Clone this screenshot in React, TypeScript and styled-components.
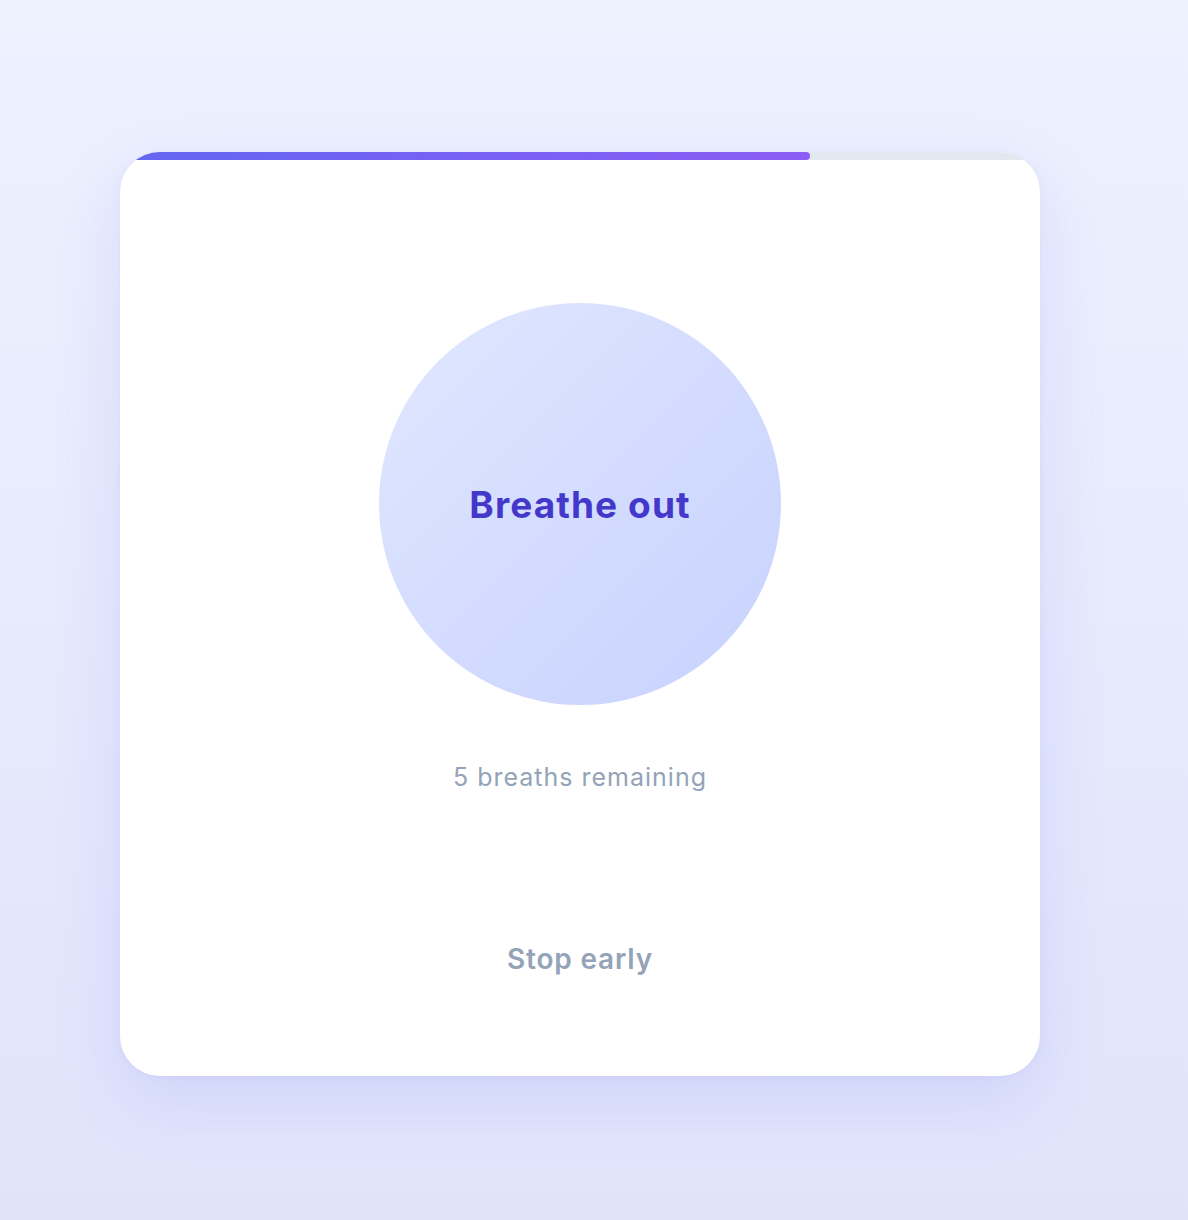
import styled, { createGlobalStyle } from 'styled-components';

const GlobalStyle = createGlobalStyle`
  html, body {
    margin: 0;
    padding: 0;
  }
  body {
    font-family: Inter, "Noto Sans", sans-serif;
    background: linear-gradient(180deg, #eef1fe 0%, #e0e4fb 100%);
    min-height: 1220px;
  }
`;

const Page = styled.div`
  min-height: 1220px;
  box-sizing: border-box;
  padding: 152px 0 0 120px;
`;

const Card = styled.div`
  width: 920px;
  height: 924px;
  background: #ffffff;
  border-radius: 40px;
  overflow: hidden;
  box-shadow: 0 24px 70px rgba(99, 102, 241, 0.14), 0 2px 6px rgba(99, 102, 241, 0.05);
  display: flex;
  flex-direction: column;
`;

const Track = styled.div`
  height: 8px;
  background: #e2e8f0;
  flex-shrink: 0;
`;

const Fill = styled.div`
  height: 100%;
  border-radius: 0 4px 4px 0;
  background: linear-gradient(90deg, #6366f1 0%, #8b5cf6 100%);
`;

const Body = styled.div`
  flex: 1;
  display: flex;
  flex-direction: column;
  align-items: center;
  padding-top: 143px;
`;

const Bubble = styled.div<{ $size: number }>`
  width: ${(p) => p.$size}px;
  height: ${(p) => p.$size}px;
  border-radius: 50%;
  background: linear-gradient(135deg, #e0e7ff 0%, #c7d2fe 100%);
  display: flex;
  align-items: center;
  justify-content: center;
`;

const Phase = styled.span`
  font-size: 37px;
  font-weight: 700;
  color: #4338ca;
  letter-spacing: 1.1px;
`;

const Remaining = styled.p`
  margin: 56px 0 0;
  font-size: 25px;
  line-height: 32px;
  letter-spacing: 1px;
  color: #94a3b8;
`;

const StopButton = styled.button`
  margin-top: 138px;
  height: 56px;
  padding: 0 24px;
  border: none;
  background: transparent;
  font-family: inherit;
  font-size: 28px;
  font-weight: 600;
  letter-spacing: 0.8px;
  color: #94a3b8;
  cursor: pointer;
`;

const progress = 0.75;

export default function App() {
  return (
    <>
      <GlobalStyle />
      <Page>
        <Card>
          <Track>
            <Fill style={{ width: `${progress * 100}%` }} />
          </Track>
          <Body>
            <Bubble $size={402}>
              <Phase>Breathe out</Phase>
            </Bubble>
            <Remaining>5 breaths remaining</Remaining>
            <StopButton>Stop early</StopButton>
          </Body>
        </Card>
      </Page>
    </>
  );
}
